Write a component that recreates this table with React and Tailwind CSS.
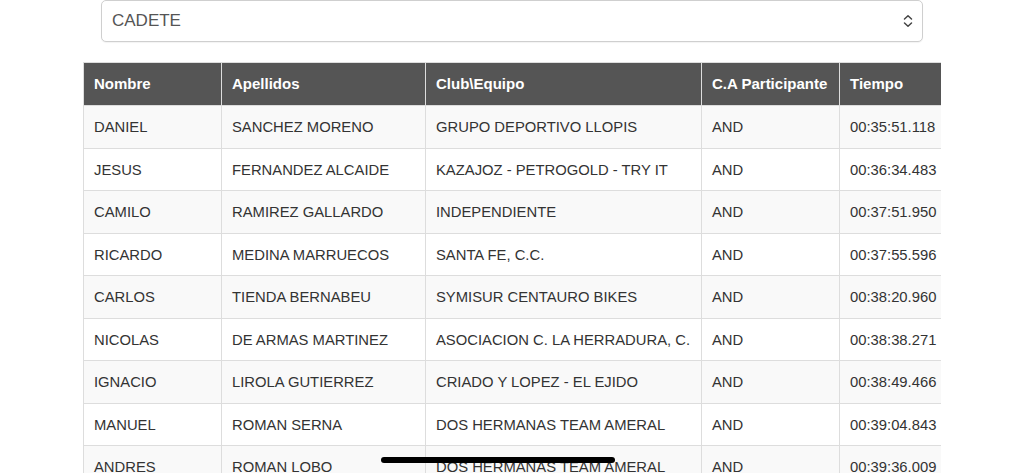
import React from "react";

const rows = [
  ["DANIEL", "SANCHEZ MORENO", "GRUPO DEPORTIVO LLOPIS", "AND", "00:35:51.118"],
  ["JESUS", "FERNANDEZ ALCAIDE", "KAZAJOZ - PETROGOLD - TRY IT", "AND", "00:36:34.483"],
  ["CAMILO", "RAMIREZ GALLARDO", "INDEPENDIENTE", "AND", "00:37:51.950"],
  ["RICARDO", "MEDINA MARRUECOS", "SANTA FE, C.C.", "AND", "00:37:55.596"],
  ["CARLOS", "TIENDA BERNABEU", "SYMISUR CENTAURO BIKES", "AND", "00:38:20.960"],
  ["NICOLAS", "DE ARMAS MARTINEZ", "ASOCIACION C. LA HERRADURA, C.", "AND", "00:38:38.271"],
  ["IGNACIO", "LIROLA GUTIERREZ", "CRIADO Y LOPEZ - EL EJIDO", "AND", "00:38:49.466"],
  ["MANUEL", "ROMAN SERNA", "DOS HERMANAS TEAM AMERAL", "AND", "00:39:04.843"],
  ["ANDRES", "ROMAN LOBO", "DOS HERMANAS TEAM AMERAL", "AND", "00:39:36.009"],
];

const headers = ["Nombre", "Apellidos", "Club\\Equipo", "C.A Participante", "Tiempo"];

const App = () => {
  return (
    <div className="relative h-[473px] w-[1024px] overflow-hidden bg-white font-['Liberation_Sans',Arial,sans-serif]">
      {/* category select */}
      <div className="ml-[101px] flex h-[42px] w-[822px] items-center justify-between rounded-[5px] border border-[#cfcfcf] bg-white pl-[10px] pr-[8px] shadow-[0_1px_1px_rgba(0,0,0,0.05)]">
        <span className="text-[17px] text-[#555]">CADETE</span>
        <svg width="12" height="14" viewBox="0 0 12 14" fill="none" stroke="#444" strokeWidth="1.5" strokeLinecap="round" strokeLinejoin="round">
          <path d="M2.5 5 L6 1.8 L9.5 5" />
          <path d="M2.5 9 L6 12.2 L9.5 9" />
        </svg>
      </div>

      {/* results table */}
      <div className="ml-[83px] mt-[20px] w-[858px] overflow-hidden">
        <table className="w-[870px] table-fixed border-collapse text-[14.8px]">
          <colgroup>
            <col className="w-[138px]" />
            <col className="w-[204px]" />
            <col className="w-[276px]" />
            <col className="w-[138px]" />
            <col className="w-[114px]" />
          </colgroup>
          <thead>
            <tr className="h-[43px] bg-[#555555]">
              {headers.map((h) => (
                <th key={h} className="whitespace-nowrap border border-[#dddddd] px-[10px] text-left text-[15px] font-bold text-white">
                  {h}
                </th>
              ))}
            </tr>
          </thead>
          <tbody>
            {rows.map((r, i) => (
              <tr key={i} className={i % 2 === 0 ? "h-[42.5px] bg-[#f9f9f9]" : "h-[42.5px] bg-white"}>
                {r.map((c, j) => (
                  <td key={j} className="whitespace-nowrap border border-[#dddddd] px-[10px] pt-[1px] text-[#333]">
                    {c}
                  </td>
                ))}
              </tr>
            ))}
          </tbody>
        </table>
      </div>

      {/* home indicator */}
      <div className="absolute left-[381px] top-[457px] h-[6px] w-[234px] rounded-full bg-black" />
    </div>
  );
};

export default App;
